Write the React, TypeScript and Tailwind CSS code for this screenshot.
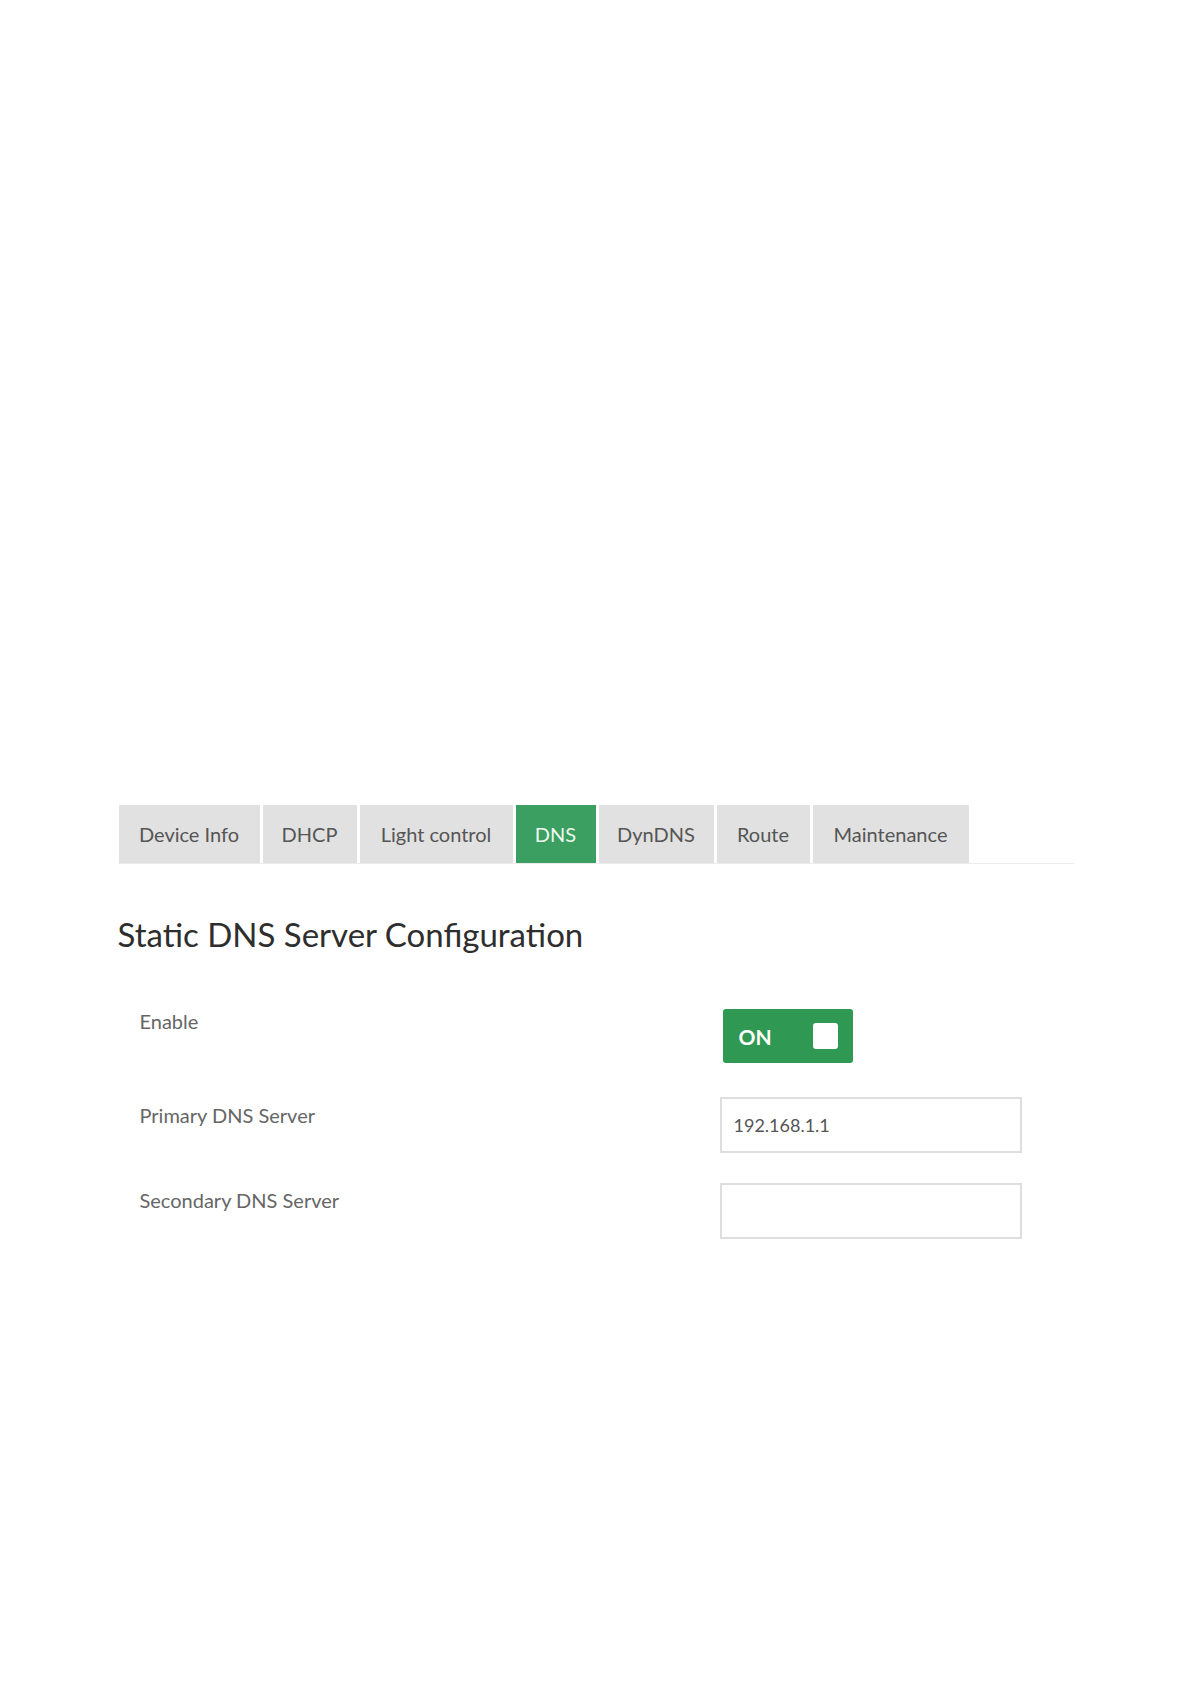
import { useState } from "react";

const tabs = [
  { label: "Device Info", w: "w-[141px]" },
  { label: "DHCP", w: "w-[94px]" },
  { label: "Light control", w: "w-[153px]" },
  { label: "DNS", w: "w-[80px]" },
  { label: "DynDNS", w: "w-[115px]" },
  { label: "Route", w: "w-[93px]" },
  { label: "Maintenance", w: "w-[156px]" },
];

function Toggle({ on, onChange }: { on: boolean; onChange: (v: boolean) => void }) {
  return (
    <button
      type="button"
      onClick={() => onChange(!on)}
      className={
        "flex h-[54px] w-[130px] items-center justify-between rounded-[3px] pl-[16px] pr-[15px] " +
        (on ? "bg-[#2f9953]" : "bg-[#bdbdbd]")
      }
    >
      <span className="text-[21px] font-bold leading-none text-white">{on ? "ON" : "OFF"}</span>
      <span className="h-[26px] w-[25px] rounded-[3px] bg-white" />
    </button>
  );
}

export default function App() {
  const [enabled, setEnabled] = useState(true);
  const [primary, setPrimary] = useState("192.168.1.1");
  const [secondary, setSecondary] = useState("");

  return (
    <div className="min-h-[1684px] bg-white font-['Lato','Open_Sans',sans-serif]">
      <div className="mx-auto w-[956px] pt-[805px]">
        <div className="flex gap-[3px] border-b border-[#ececec] pl-[1px]">
          {tabs.map((t) => (
            <div
              key={t.label}
              className={
                "flex h-[58px] items-center justify-center text-[20px] " +
                t.w +
                " " +
                (t.label === "DNS" ? "bg-[#3a9f61] text-[#eef8ee]" : "bg-[#e1e1e1] text-[#555]")
              }
            >
              {t.label}
            </div>
          ))}
        </div>

        <h1 className="mt-[50px] text-[33px] leading-[40px] text-[#2e2e2e]">Static DNS Server Configuration</h1>

        <div className="mt-[55px] flex flex-col gap-[34px]">
          <div className="flex">
            <div className="w-[602px] pl-[22px] text-[20px] leading-[24px] text-[#666]">Enable</div>
            <div className="pl-[3px]">
              <Toggle on={enabled} onChange={setEnabled} />
            </div>
          </div>
          <div className="flex">
            <div className="w-[602px] pl-[22px] pt-[3px] text-[20px] text-[#666]">Primary DNS Server</div>
            <input
              value={primary}
              onChange={(e) => setPrimary(e.target.value)}
              className="h-[56px] w-[302px] border-2 border-[#dedede] bg-white px-[12px] text-[18px] text-[#555] outline-none"
            />
          </div>
          <div className="-mt-[4px] flex">
            <div className="w-[602px] pl-[22px] pt-[2px] text-[20px] text-[#666]">Secondary DNS Server</div>
            <input
              value={secondary}
              onChange={(e) => setSecondary(e.target.value)}
              className="h-[56px] w-[302px] border-2 border-[#dedede] bg-white px-[12px] text-[18px] text-[#555] outline-none"
            />
          </div>
        </div>
      </div>
    </div>
  );
}
